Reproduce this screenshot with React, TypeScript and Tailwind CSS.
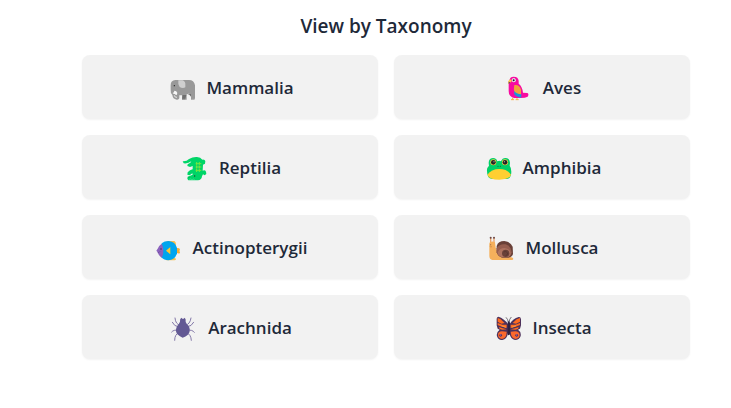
import React from "react";

const ElephantIcon = () => (
  <>
    <path d="M31 46Q31 31 45 30H86Q101 30 104 46V84Q104 89 100 89H92V74Q86 69 79 73V89H65V76H57V85Q55 90 49 89Q37 87 36 75Q30 70 31 59Z" fill="#999999" />
    <path d="M67 75H78L74 89H65ZM81 72H92V80L87 74Z" fill="#6f6f6f" />
    <path d="M54 31H67Q76 35 75 44V52Q67 56 58 51Q52 43 54 31Z" fill="#cfcfcf" />
    <path d="M42 62Q49 62 51 69L49 75Q45 76 44 72Q39 73 37 69Q42 68 42 62Z" fill="#f7f7f7" />
    <path d="M42 76Q43 83 50 82" stroke="#e5e5e5" strokeWidth="3" fill="none" />
    <circle cx="42" cy="47" r="2" fill="#222222" />
    <path d="M65 88H76M93 88H103" stroke="#b9b9b9" strokeWidth="2" />
  </>
);

const ParrotIcon = () => (
  <>
    <path d="M46 83V89M59 83V89M41 89H50M55 89H64" stroke="#fcb040" strokeWidth="3" />
    <path d="M36 33Q37 20 49 20Q63 20 64 33V41Q75 49 77 68L90 69Q96 72 91 80Q84 84 70 84H50Q34 80 34 64V34Z" fill="#f80ba0" />
    <path d="M51 45Q67 43 71 59V80Q57 79 51 67Q48 59 51 45Z" fill="#f4a23a" />
    <path d="M50 63Q57 72 72 73V83Q57 82 51 73Z" fill="#1b95db" />
    <path d="M43 31Q43 24 51 24Q56 26 56 32Q54 37 48 37Q43 36 43 31Z" fill="#e4e4ec" />
    <circle cx="49" cy="31" r="3" fill="#281e32" />
    <path d="M36 29Q42 27 43 31Q44 36 37 38L34 42Q30 36 36 29Z" fill="#ffc84a" />
    <path d="M34 35Q38 35 39 38L34 42Z" fill="#635168" />
  </>
);

const CrocodileIcon = () => (
  <>
    <path d="M28 34Q40 35 47 27Q59 20 71 21Q82 22 87 29Q95 28 96 34L95 41L89 44L88 62Q95 59 98 65L99 72L94 76L89 73L86 79Q85 90 74 91H45Q40 86 43 80L58 74L57 70L49 76L42 74L43 67L50 61L58 58V48L50 51L42 48L43 43L51 38L54 34Q44 42 31 40Z" fill="#00d567" />
    <path d="M70 36V66M78 36V66M67 41H84M67 51H84M67 61H84" stroke="#78e640" strokeWidth="3" />
    <path d="M69 46H82M69 56H82" stroke="#39b846" strokeWidth="2" strokeDasharray="3 5" />
    <circle cx="64" cy="78" r="2" fill="#203b2c" />
    <path d="M48 88L52 87L56 89L60 87L64 89" stroke="#a9efc6" strokeWidth="1" fill="none" />
    <circle cx="47" cy="82" r="1.5" fill="#009447" />
  </>
);

const FrogIcon = () => (
  <>
    <path d="M29 63Q28 53 35 47Q32 33 38 27Q48 20 57 28L60 34Q66 31 71 34Q75 23 86 24Q98 26 98 39L97 47Q102 53 102 65Q102 86 88 87H44Q29 86 29 63Z" fill="#00d067" />
    <path d="M30 74Q42 57 66 57Q90 57 101 74Q97 89 66 89Q35 89 30 74Z" fill="#ffcf32" />
    <circle cx="48" cy="37" r="9" fill="#f6c846" />
    <circle cx="83" cy="37" r="9" fill="#f6c846" />
    <circle cx="48" cy="37" r="7" fill="#252326" />
    <circle cx="83" cy="37" r="7" fill="#252326" />
    <circle cx="50" cy="35" r="1.5" fill="#ffffff" />
    <circle cx="81" cy="35" r="1.5" fill="#ffffff" />
    <circle cx="62" cy="49" r="1.5" fill="#14502d" />
    <circle cx="69" cy="49" r="1.5" fill="#14502d" />
  </>
);

const FishIcon = () => (
  <>
    <path d="M58 33H81Q86 36 86 43L80 81L86 87Q86 91 81 91H57Z" fill="#f9c04c" />
    <path d="M85 55L92 54Q98 54 98 59L96 63L98 67Q98 72 92 70L85 68Z" fill="#f5ad34" />
    <path d="M43 40Q51 33 64 33Q84 35 89 54V70Q83 90 63 91Q50 91 42 82Z" fill="#00a5ee" />
    <path d="M43 41Q34 47 31 56L27 62L31 67Q34 77 43 83Q48 75 48 62Q48 49 43 41Z" fill="#8b63bd" />
    <path d="M56 62L69 51V73Z" fill="#ffc72e" />
    <circle cx="41" cy="57" r="2" fill="#302642" />
    <path d="M31 68Q36 68 38 64" stroke="#664195" strokeWidth="2" fill="none" />
  </>
);

const SnailIcon = () => (
  <>
    <path d="M31 24V46M41 24V46" stroke="#e9a26c" strokeWidth="4" />
    <path d="M29 37Q36 32 44 37L46 53Q50 66 61 73L97 83Q102 90 94 90H36Q27 89 27 78V42Q27 39 29 37Z" fill="#f5b05c" />
    <path d="M49 48Q53 33 72 33Q91 35 97 50L98 72Q95 82 84 83H65Q53 80 49 67Z" fill="#694038" />
    <path d="M49 55Q58 40 76 43Q92 49 94 67Q92 80 81 82H65Q53 80 49 67Z" fill="#955d4f" />
    <path d="M52 69Q56 54 73 54Q90 56 91 69Q91 79 81 82H65Q55 79 52 69Z" fill="#ad7260" />
    <circle cx="76" cy="70" r="11" fill="#694038" />
    <path d="M70 66Q76 61 82 69Q82 76 76 77" stroke="#51312d" strokeWidth="2" fill="none" />
    <circle cx="31" cy="23" r="3" fill="#6b4643" />
    <circle cx="41" cy="23" r="3" fill="#6b4643" />
    <circle cx="31" cy="44" r="1.5" fill="#784a37" />
    <path d="M28 49Q31 52 35 50" stroke="#b87336" strokeWidth="1.5" fill="none" />
  </>
);

const SpiderIcon = () => (
  <>
    <path
      d="M52 45Q40 44 38 24M49 51Q35 49 30 37M47 61Q34 58 28 66M49 69Q37 72 37 91M70 45Q83 44 86 24M73 51Q89 49 94 37M76 61Q90 58 96 67M73 69Q86 72 87 91"
      stroke="#8378a8"
      strokeWidth="3"
      strokeLinecap="round"
      fill="none"
    />
    <path d="M53 35Q52 26 57 23L60 26H64L67 23Q71 26 70 36L74 43Q84 52 82 64Q80 77 61 83Q43 76 41 64Q40 52 49 43Z" fill="#635994" />
  </>
);

const ButterflyIcon = () => (
  <>
    <path d="M65 42Q53 25 36 20Q30 21 31 29V46L34 56L40 59Q29 67 32 79Q37 92 48 90Q62 88 65 69L69 69Q73 88 86 90Q99 90 103 78Q105 65 95 59L101 56L104 46V28Q103 20 97 21Q80 26 70 42Z" fill="#4d315b" />
    <path d="M34 24L43 28L55 39L45 41L34 35ZM34 39L48 44H61V54L43 49L34 45ZM38 51L49 55L61 58L48 59L40 57ZM101 24L91 28L79 39L89 41L101 35ZM101 39L87 44H73V54L91 49L101 45ZM97 51L86 55L73 58L87 59L95 57Z" fill="#ff6b20" />
    <path d="M46 46L59 50V53L45 49ZM89 46L76 50V53L90 49Z" fill="#ff973d" />
    <path d="M61 65Q61 84 47 87Q35 85 35 75Q35 64 47 64ZM73 65Q74 84 87 87Q100 85 100 75Q99 64 87 64Z" fill="#fb682d" />
    <circle cx="43" cy="76" r="4" fill="#493064" />
    <circle cx="91" cy="76" r="4" fill="#493064" />
    <circle cx="43" cy="75" r="2" fill="#b76aa0" />
    <circle cx="91" cy="75" r="2" fill="#b76aa0" />
    <path d="M66 37Q65 28 59 22M68 37Q69 27 75 21" stroke="#393341" strokeWidth="2" fill="none" />
    <path d="M64 40Q64 34 67 34Q71 34 71 40V70Q71 76 67 76Q63 76 64 70Z" fill="#302340" />
  </>
);

const taxonomies = [
  { name: "Mammalia", icon: <ElephantIcon /> },
  { name: "Aves", icon: <ParrotIcon /> },
  { name: "Reptilia", icon: <CrocodileIcon /> },
  { name: "Amphibia", icon: <FrogIcon /> },
  { name: "Actinopterygii", icon: <FishIcon /> },
  { name: "Mollusca", icon: <SnailIcon /> },
  { name: "Arachnida", icon: <SpiderIcon /> },
  { name: "Insecta", icon: <ButterflyIcon /> },
];

const App = () => {
  return (
    <main className="min-h-screen bg-white pt-3 pr-[41px] pl-[82px] font-['Open_Sans',sans-serif] text-gray-800">
      <h2 className="mb-[15px] text-center text-[19px] leading-7 font-semibold">
        View by Taxonomy
      </h2>
      <div className="grid grid-cols-2 gap-4">
        {taxonomies.map((taxonomy) => (
          <button
            key={taxonomy.name}
            type="button"
            className="flex h-16 items-center justify-center gap-3 rounded-lg bg-[#f2f2f2] px-4 shadow-[0_1px_2px_rgba(0,0,0,0.05)]"
          >
            <svg viewBox="17 9 84 84" className="h-7 w-7 overflow-visible" aria-hidden="true">
              {taxonomy.icon}
            </svg>
            <span className="pt-0.5 text-[17px] leading-8 font-semibold">
              {taxonomy.name}
            </span>
          </button>
        ))}
      </div>
    </main>
  );
};

export default App;
